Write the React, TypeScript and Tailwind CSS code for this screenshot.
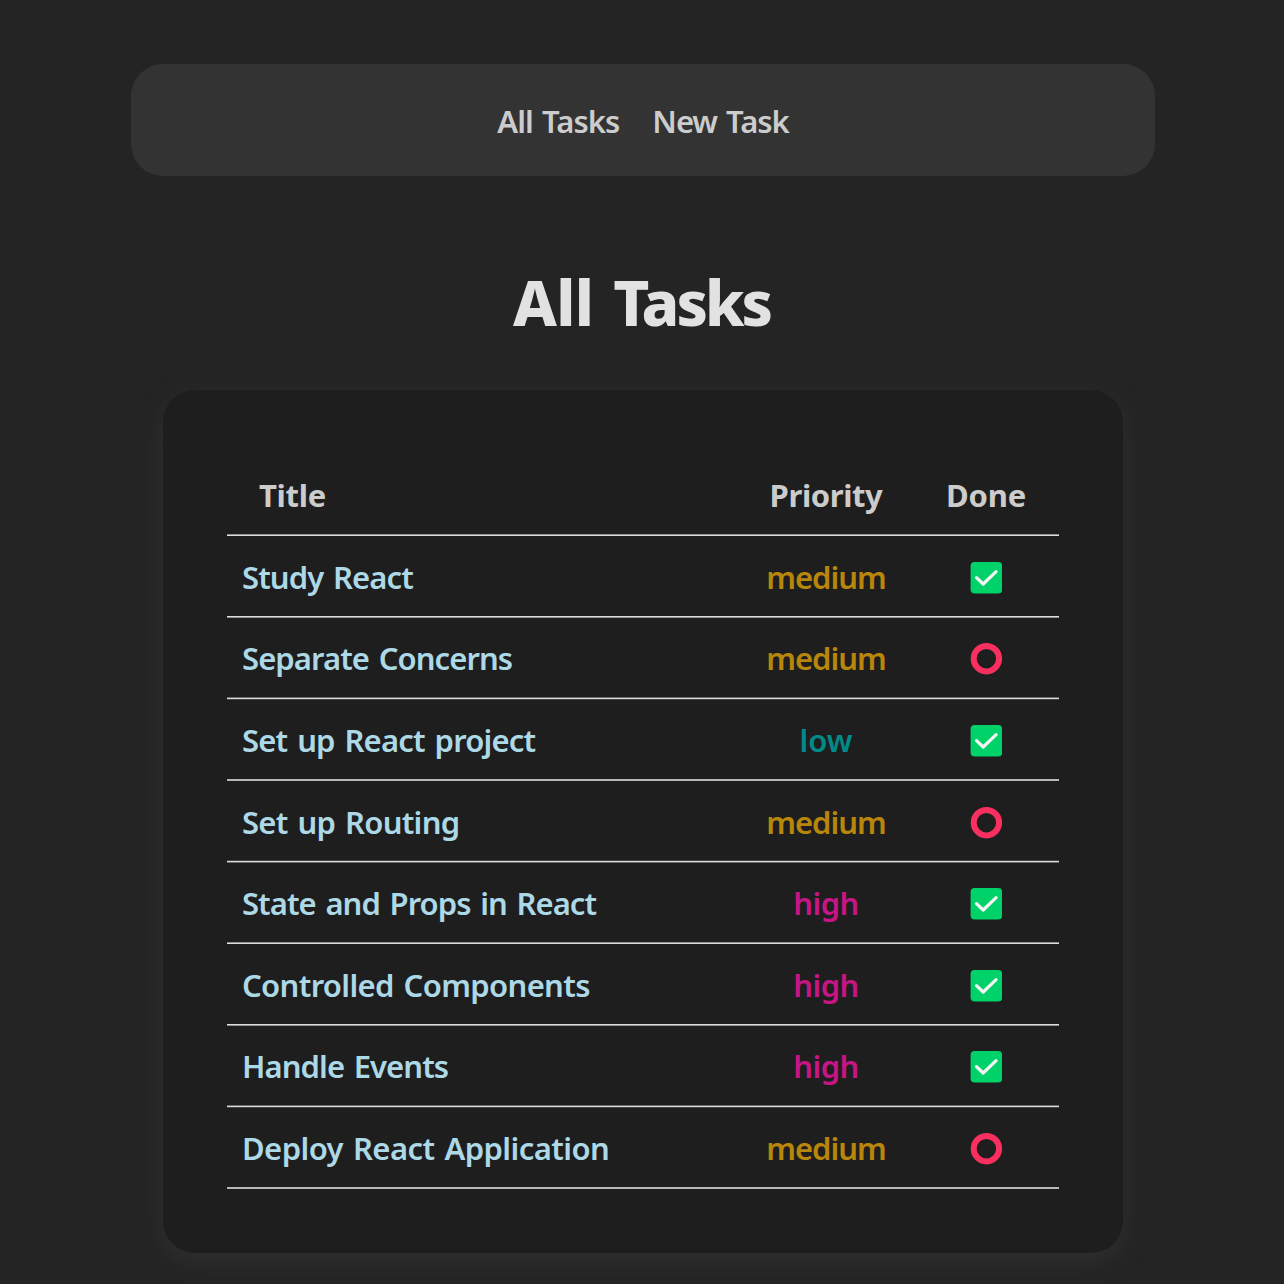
const tasks = [
  { title: "Study React", tracking: "tracking-[-0.9px]", priority: "medium", done: true },
  { title: "Separate Concerns", tracking: "tracking-[-0.92px]", priority: "medium", done: false },
  { title: "Set up React project", tracking: "tracking-[-0.8px]", priority: "low", done: true },
  { title: "Set up Routing", tracking: "tracking-[-0.72px]", priority: "medium", done: false },
  { title: "State and Props in React", tracking: "tracking-[-0.94px]", priority: "high", done: true },
  { title: "Controlled Components", tracking: "tracking-[-0.66px]", priority: "high", done: true },
  { title: "Handle Events", tracking: "tracking-[-0.93px]", priority: "high", done: true },
  { title: "Deploy React Application", tracking: "tracking-[-0.58px]", priority: "medium", done: false },
];

const priorityColors: Record<string, string> = {
  low: "text-[#008b8b]",
  medium: "text-[#b8860b] tracking-[-1px]",
  high: "text-[#c71585] tracking-[-0.6px]",
};

const FIRST_LINE = 80.4;
const ROW_HEIGHT = 81.6;
const LINE_WIDTH = 1.6;

const lineTop = (index: number) => Math.round((FIRST_LINE + ROW_HEIGHT * index) * 10) / 10;

/** A 1.6px rule, softened over the device pixels that it covers. */
function Divider({ index }: { index: number }) {
  const start = lineTop(index) - Math.floor(lineTop(index));
  return (
    <div className="w-full shrink-0">
      {[0, 1, 2].map((px) => {
        const cover = Math.max(0, Math.min(px + 1, start + LINE_WIDTH) - Math.max(px, start));
        return <div key={px} className="h-px bg-[#dedede]" style={{ opacity: cover }} />;
      })}
    </div>
  );
}

function Status({ done }: { done: boolean }) {
  return done ? (
    <svg width="32" height="32" viewBox="0 0 32 32" fill="none">
      <rect x="0.6" y="0.1" width="31.6" height="31.5" rx="4" fill="#00d26a" />
      <path d="M6.5 15.6L13.2 22L26.1 9.6" stroke="#f4f4f4" strokeWidth="3.2" strokeLinecap="round" strokeLinejoin="round" />
    </svg>
  ) : (
    <svg width="32" height="32" viewBox="0 0 32 32" fill="none">
      <circle cx="16.4" cy="15.7" r="12.7" stroke="#f92f60" strokeWidth="6" />
    </svg>
  );
}

export default function App() {
  return (
    <div className="h-[1284px] overflow-hidden bg-[#242424] pt-16 pl-[2px] font-['Noto_Sans',sans-serif] text-[31px] font-[560] text-white/[0.87]">
      <nav className="mx-auto flex h-28 w-[1024px] items-center justify-center gap-[33px] rounded-[32px] bg-[#333333] pt-[3px] text-[#cccccc] [word-spacing:2px]">
        <a className="tracking-[-0.95px]">All Tasks</a>
        <a className="tracking-[-1.05px]">New Task</a>
      </nav>
      <h1 className="mt-[88px] flex h-[126px] justify-center gap-[20px] pr-[3px] text-[62px] leading-[76px] font-extrabold">
        <span className="tracking-[-0.6px]">All</span>
        <span className="tracking-[-3px]">Tasks</span>
      </h1>
      <main className="mx-auto h-[863px] w-[960px] rounded-[32px] bg-[#1e1e1e] px-16 pt-16 shadow-[0_8px_24px_#303030]">
        <div className="flex h-[80px] items-center pt-[2px] font-bold text-[#cccccc]">
          <span className="w-[526px] shrink-0 pl-8 tracking-[-0.3px]">Title</span>
          <span className="w-[146px] shrink-0 text-center tracking-[-0.4px]">Priority</span>
          <span className="w-[174px] shrink-0 text-center tracking-[-0.2px]">Done</span>
        </div>
        <Divider index={0} />
        {tasks.map((task, i) => (
          <div
            key={task.title}
            className="flex flex-col"
            style={{ height: Math.floor(lineTop(i + 1)) - Math.floor(lineTop(i)) }}
          >
            <div className={`flex grow items-center ${i === 3 ? "pt-[3.4px]" : "pt-[2.4px]"}`}>
              <span className={`-mt-px w-[526px] shrink-0 pl-[15px] text-[#add8e6] [word-spacing:2.5px] ${task.tracking}`}>
                {task.title}
              </span>
              <span className={`-mt-px w-[146px] shrink-0 text-center ${priorityColors[task.priority]}`}>
                {task.priority}
              </span>
              <span className="flex w-[174px] shrink-0 justify-center">
                <Status done={task.done} />
              </span>
            </div>
            <Divider index={i + 1} />
          </div>
        ))}
      </main>
    </div>
  );
}
